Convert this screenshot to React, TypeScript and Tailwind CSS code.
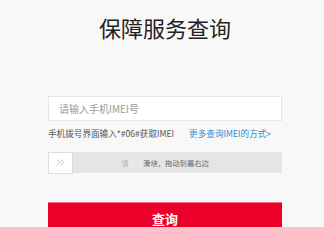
export default function App() {
  return (
    <div
      className="min-h-[227px] w-full bg-[#f8f8f8] overflow-hidden"
      style={{ fontFamily: '"Noto Sans CJK SC", "Noto Sans", sans-serif' }}
    >
      <div className="ml-[48px] w-[234px] pt-[12px]">
        <h1 className="h-[30px] text-center text-[22px] leading-[30px] text-[#222]">保障服务查询</h1>

        <div className="mt-[54px] flex h-[25px] items-center border border-[#e6e6e6] bg-white pl-[10px]">
          <span className="text-[10px] text-[#9a9a9a]">请输入手机IMEI号</span>
        </div>

        <div className="mt-[6px] flex h-[12px] items-center text-[8.6px] leading-[12px]">
          <span className="text-[#555]">手机拨号界面输入*#06#获取IMEI</span>
          <span className="ml-[15px] text-[#2b8fd6]">更多查询IMEI的方式&gt;</span>
        </div>

        <div className="relative mt-[13px] flex h-[21px] items-center bg-[#e5e5e5]">
          <div className="flex h-[22px] w-[25px] items-center justify-center border border-[#dcdcdc] bg-white">
            <svg width="9" height="7" viewBox="0 0 9 7" fill="none" stroke="#b8b8c4" strokeWidth="0.9">
              <path d="M1 0.5 L4 3.5 L1 6.5" />
              <path d="M4.5 0.5 L7.5 3.5 L4.5 6.5" />
            </svg>
          </div>
          <div className="flex-1 pr-[25px] text-center text-[7.3px] leading-[10px]">
            <span className="text-[#b5b5b5]">请</span>
            <span className="text-[#f0f0f0]">按住</span>
            <span className="text-[#666]">滑块，拖动到最右边</span>
          </div>
        </div>

        <button className="mt-[29px] flex h-[32px] w-full items-center justify-center border-t border-[#f36a82] bg-[#eb0029] text-[13px] font-bold leading-[16px] text-white">
          查询
        </button>
      </div>
    </div>
  );
}
